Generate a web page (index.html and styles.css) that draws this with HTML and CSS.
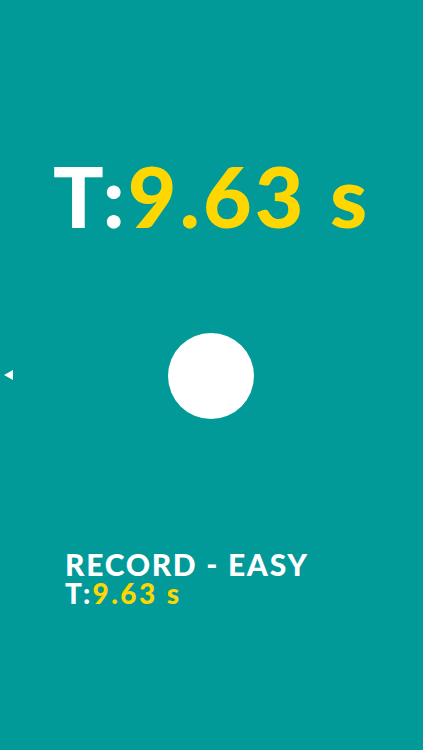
FILE: index.html
```html
<!DOCTYPE html>
<html>
<head>
<meta charset="utf-8">
<link rel="stylesheet" href="styles.css">
</head>
<body>
<div class="screen">
  <div class="timer"><span class="w">T:</span><span class="y">9.63 s</span></div>
  <div class="middle">
    <div class="back"></div>
    <div class="ball"></div>
  </div>
  <div class="record">
    <div class="title">RECORD - EASY</div>
    <div class="best"><span class="w">T:</span><span class="y">9.63 s</span></div>
  </div>
</div>
</body>
</html>
```
FILE: styles.css
```css
html, body { margin: 0; padding: 0; }
body { background: #019a99; font-family: Lato, "Noto Sans", sans-serif; }
.screen { width: 423px; height: 750px; display: flex; flex-direction: column; }
.w { color: #ffffff; }
.y { color: #ffd700; }
.timer { font-weight: 900; font-size: 84px; line-height: 86px; margin-top: 153px; padding-left: 53px; white-space: nowrap; letter-spacing: 3.2px; }
.middle { position: relative; height: 86px; margin-top: 94px; }
.ball { width: 86px; height: 86px; border-radius: 50%; background: #fff; margin-left: 168px; }
.back { position: absolute; left: 4px; top: 37px; width: 0; height: 0; border-top: 5.5px solid transparent; border-bottom: 5.5px solid transparent; border-right: 9px solid #fff; }
.record { margin-top: 130px; padding-left: 65px; font-weight: 900; }
.title { color: #fff; font-size: 30px; line-height: 30px; letter-spacing: 1.7px; white-space: nowrap; }
.best { font-size: 28px; line-height: 29px; letter-spacing: 2.4px; white-space: nowrap; }
```
